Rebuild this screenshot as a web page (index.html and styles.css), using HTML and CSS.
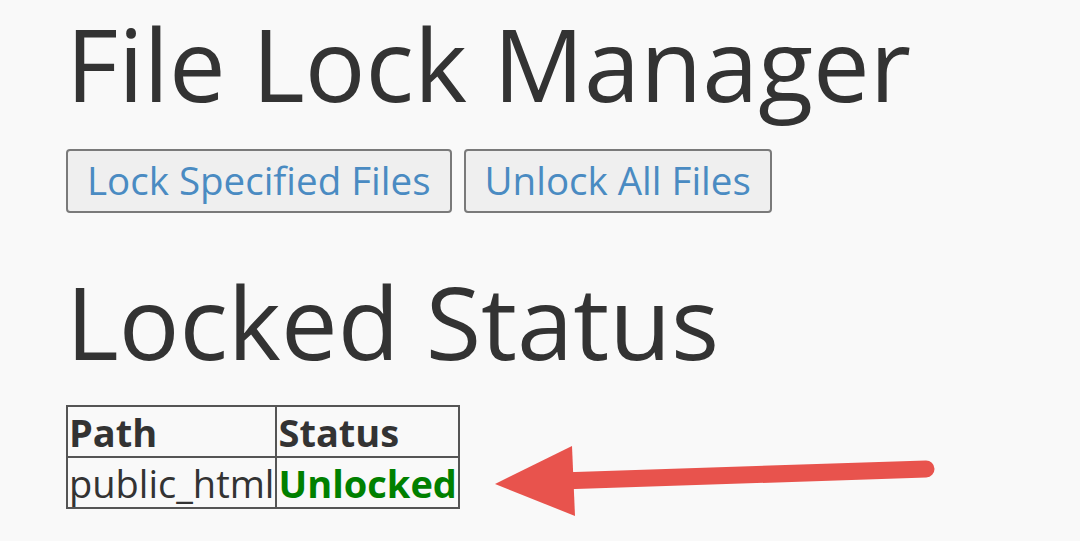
FILE: index.html
```html
<!DOCTYPE html>
<html>
<head>
<meta charset="utf-8">
<link rel="stylesheet" href="styles.css">
</head>
<body>
<main class="page">
  <h1 class="title">File Lock Manager</h1>
  <div class="actions">
    <button class="btn">Lock Specified Files</button>
    <button class="btn">Unlock All Files</button>
  </div>
  <h2 class="title section">Locked Status</h2>
  <table class="status">
    <tr><th>Path</th><th>Status</th></tr>
    <tr><td>public_html</td><td class="unlocked">Unlocked</td></tr>
  </table>
</main>
<svg class="arrow" width="1080" height="541" viewBox="0 0 1080 541">
  <line x1="926" y1="469" x2="560" y2="481" stroke="#e8534d" stroke-width="17" stroke-linecap="round"/>
  <polygon points="495,484 572,446 575,516" fill="#e8534d"/>
</svg>
</body>
</html>
```
FILE: styles.css
```css
html, body {
  margin: 0;
  padding: 0;
  background: #f9f9f9;
}
body {
  font-family: "Open Sans", "Noto Sans", sans-serif;
  color: #333;
  width: 1080px;
  height: 541px;
  overflow: hidden;
  position: relative;
}
.page {
  padding: 2px 0 0 66px;
}
.title {
  margin: 0;
  font-size: 101px;
  font-weight: 400;
  line-height: 122px;
  color: #333;
  white-space: nowrap;
}
.actions {
  display: flex;
  gap: 12px;
  margin-top: 25px;
}
.btn {
  height: 64px;
  padding: 0 19px 2px;
  border: 2px solid #7a7a7a;
  border-radius: 4px;
  background: #efefef;
  font-family: inherit;
  font-size: 38.5px;
  color: #4a8bc2;
  display: flex;
  align-items: center;
  white-space: nowrap;
}
.section {
  margin-top: 47px;
}
.status {
  margin-top: 23px;
  border-collapse: collapse;
  font-size: 38px;
}
.status th, .status td {
  border: 2px solid #555;
  padding: 0 1px;
  height: 49px;
  text-align: left;
  line-height: 46px;
  white-space: nowrap;
}
.status th {
  font-weight: 700;
  line-height: 42px;
}
.unlocked {
  color: #008000;
  font-weight: 700;
}
.arrow {
  position: absolute;
  left: 0;
  top: 0;
  pointer-events: none;
}
```
